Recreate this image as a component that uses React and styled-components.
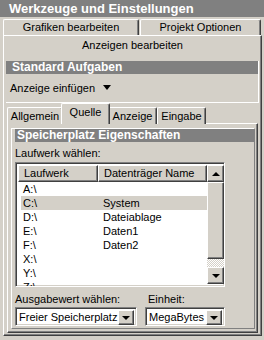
import React from 'react';
import styled, { createGlobalStyle, css } from 'styled-components';

const Global = createGlobalStyle`
  html, body { margin: 0; padding: 0; background: #d4d0c8; }
  body { font-family: "Liberation Sans", Arial, sans-serif; font-size: 11px; color: #000; }
  * { box-sizing: border-box; }
`;

const raised = css`
  border-top: 1px solid #fff;
  border-left: 1px solid #fff;
  border-right: 1px solid #404040;
  border-bottom: 1px solid #404040;
  box-shadow: inset -1px -1px 0 #808080;
`;

const sunken = css`
  border-top: 1px solid #808080;
  border-left: 1px solid #808080;
  border-right: 1px solid #fff;
  border-bottom: 1px solid #fff;
  box-shadow: inset 1px 1px 0 #404040, inset -1px -1px 0 #d4d0c8;
`;

const Window = styled.div`
  width: 264px;
  height: 340px;
  background: #d4d0c8;
  overflow: hidden;
  display: flex;
  flex-direction: column;
`;

const TitleBar = styled.div`
  height: 17px;
  background: #808080;
  color: #fff;
  font-weight: bold;
  font-size: 13px;
  line-height: 17px;
  padding-left: 9px;
  white-space: nowrap;
`;

const BackTabRow = styled.div`
  display: flex;
  gap: 1px;
  padding: 2px 3px 0 3px;
  height: 18px;
`;

const BackTab = styled.div`
  width: ${p => p.$w}px;
  height: 16px;
  border-top: 1px solid #fff;
  border-left: 1px solid #fff;
  border-right: 1px solid #404040;
  border-radius: 2px 2px 0 0;
  box-shadow: inset -1px 0 0 #808080;
  text-align: center;
  line-height: 15px;
  white-space: nowrap;
`;

const OuterPage = styled.div`
  margin: 0 2px 0 3px;
  height: 301px;
  border-top: 1px solid #fff;
  border-left: 1px solid #fff;
  border-right: 1px solid #404040;
  border-bottom: 1px solid #404040;
  box-shadow: inset -1px -1px 0 #808080;
  display: flex;
  flex-direction: column;
`;

const FrontTabLabel = styled.div`
  height: 18px;
  line-height: 18px;
  text-align: center;
  white-space: nowrap;
`;

const OuterContent = styled.div`
  padding: 7px 2px 0 2px;
  display: flex;
  flex-direction: column;
`;

const TaskGroup = styled.div`
  display: flex;
  flex-direction: column;
  height: 42px;
  border-right: 1px solid #fff;
  border-bottom: 1px solid #fff;
`;

const GroupHeader = styled.div`
  height: 13px;
  background: #808080;
  color: #fff;
  font-weight: bold;
  font-size: 12px;
  line-height: 13px;
  padding-left: ${p => p.$pad || 6}px;
  white-space: nowrap;
`;

const TaskLink = styled.div`
  display: flex;
  align-items: center;
  gap: 8px;
  padding: 0 0 1px 4px;
  height: 28px;
`;

const DownTri = styled.span`
  display: inline-block;
  width: 0;
  height: 0;
  border-left: ${p => p.$s}px solid transparent;
  border-right: ${p => p.$s}px solid transparent;
  border-top: ${p => p.$h || p.$s + 1}px solid #000;
`;

const UpTri = styled.span`
  display: inline-block;
  width: 0;
  height: 0;
  border-left: 4px solid transparent;
  border-right: 4px solid transparent;
  border-bottom: 4px solid #000;
`;

const InnerTabs = styled.div`
  display: flex;
  align-items: flex-end;
  height: 20px;
  margin: 1px 0 0 1px;
  position: relative;
  z-index: 1;
`;

const InnerTab = styled.div`
  height: ${p => (p.$active ? 21 : 17)}px;
  width: ${p => p.$w}px;
  margin: ${p => (p.$active ? '0 -2px 0 -2px' : '0')};
  border-top: 1px solid #fff;
  border-left: 1px solid #fff;
  border-right: 1px solid #404040;
  border-radius: 2px 2px 0 0;
  box-shadow: inset -1px 0 0 #808080;
  background: #d4d0c8;
  text-align: center;
  line-height: ${p => (p.$active ? 17 : 16)}px;
  white-space: nowrap;
  position: relative;
  z-index: ${p => (p.$active ? 2 : 0)};
`;

const InnerPage = styled.div`
  margin: -1px 0 0 1px;
  width: 251px;
  height: 210px;
  border-top: 1px solid #fff;
  border-left: 1px solid #fff;
  border-right: 1px solid #404040;
  border-bottom: 1px solid #404040;
  box-shadow: inset -1px -1px 0 #808080;
  padding: 4px 2px 0 3px;
`;

const PropGroup = styled.div`
  height: 201px;
  border-left: 1px solid #fff;
  border-top: 1px solid #fff;
  border-right: 1px solid #808080;
  border-bottom: 1px solid #808080;
  padding: 0 0 0 3px;
`;

const Label = styled.div`
  height: 14px;
  line-height: 14px;
  margin-top: 4px;
  white-space: nowrap;
`;

const LabelRow = styled.div`
  display: flex;
  gap: 11px;
  height: 14px;
  line-height: 14px;
  margin-top: 5px;
`;

const LabelCell = styled.div`
  width: ${p => p.$w}px;
  white-space: nowrap;
`;

const ListView = styled.div`
  ${sunken};
  width: 210px;
  height: 125px;
  margin-top: 2px;
  background: #fff;
  padding: 2px;
  display: flex;
  overflow: hidden;
`;

const ListMain = styled.div`
  width: 189px;
  display: flex;
  flex-direction: column;
`;

const HeaderRow = styled.div`
  display: flex;
  height: 17px;
  flex-shrink: 0;
`;

const HeaderCell = styled.div`
  ${raised};
  width: ${p => p.$w}px;
  background: #d4d0c8;
  padding-left: 5px;
  line-height: 15px;
  white-space: nowrap;
`;

const Row = styled.div`
  display: flex;
  height: 14px;
  flex-shrink: 0;
  line-height: 14px;
  margin-left: 3px;
  background: ${p => (p.$sel ? '#d4d0c8' : 'transparent')};
`;

const Cell = styled.div`
  width: ${p => p.$w}px;
  padding-left: ${p => p.$pad}px;
  white-space: nowrap;
`;

const ScrollBar = styled.div`
  width: 17px;
  display: flex;
  flex-direction: column;
`;

const SBtn = styled.div`
  ${raised};
  width: 17px;
  height: ${p => p.$h || 17}px;
  background: #d4d0c8;
  display: flex;
  align-items: center;
  justify-content: center;
  flex-shrink: 0;
`;

const Track = styled.div`
  flex: 1;
  background-color: #fff;
  background-image: conic-gradient(#d4d0c8 25%, #fff 0 50%, #d4d0c8 0 75%, #fff 0);
  background-size: 2px 2px;
`;

const ComboRow = styled.div`
  display: flex;
  gap: 8px;
  margin-top: 1px;
`;

const Combo = styled.div`
  ${sunken};
  width: ${p => p.$w}px;
  height: 19px;
  background: #fff;
  padding: 2px;
  display: flex;
`;

const ComboText = styled.div`
  flex: 1;
  line-height: 15px;
  padding-left: 1px;
  white-space: nowrap;
`;

const DropBtn = styled.div`
  ${raised};
  width: 16px;
  height: 15px;
  background: #d4d0c8;
  display: flex;
  align-items: center;
  justify-content: center;
`;

const rows = [
  ['A:\\', ''],
  ['C:\\', 'System', true],
  ['D:\\', 'Dateiablage'],
  ['E:\\', 'Daten1'],
  ['F:\\', 'Daten2'],
  ['X:\\', ''],
  ['Y:\\', ''],
  ['Z:\\', ''],
];

export default function App() {
  return (
    <Window>
      <Global />
      <TitleBar>Werkzeuge und Einstellungen</TitleBar>
      <BackTabRow>
        <BackTab $w={136}>Grafiken bearbeiten</BackTab>
        <BackTab $w={121}>Projekt Optionen</BackTab>
      </BackTabRow>
      <OuterPage>
        <FrontTabLabel>Anzeigen bearbeiten</FrontTabLabel>
        <OuterContent>
          <TaskGroup>
            <GroupHeader>Standard Aufgaben</GroupHeader>
            <TaskLink>
              Anzeige einfügen <DownTri $s={4} $h={5} />
            </TaskLink>
          </TaskGroup>
          <InnerTabs>
            <InnerTab $w={56}>Allgemein</InnerTab>
            <InnerTab $w={49} $active>Quelle</InnerTab>
            <InnerTab $w={49}>Anzeige</InnerTab>
            <InnerTab $w={49}>Eingabe</InnerTab>
          </InnerTabs>
          <InnerPage>
            <PropGroup>
              <GroupHeader $pad={2}>Speicherplatz Eigenschaften</GroupHeader>
              <Label>Laufwerk wählen:</Label>
              <ListView>
                <ListMain>
                  <HeaderRow>
                    <HeaderCell $w={80}>Laufwerk</HeaderCell>
                    <HeaderCell $w={109}>Datenträger Name</HeaderCell>
                  </HeaderRow>
                  {rows.map(([a, b, sel]) => (
                    <Row key={a} $sel={sel}>
                      <Cell $w={77} $pad={2}>{a}</Cell>
                      <Cell $w={109} $pad={5}>{b}</Cell>
                    </Row>
                  ))}
                </ListMain>
                <ScrollBar>
                  <SBtn><UpTri /></SBtn>
                  <SBtn $h={77} />
                  <Track />
                  <SBtn><DownTri $s={4} $h={4} /></SBtn>
                </ScrollBar>
              </ListView>
              <LabelRow>
                <LabelCell $w={122}>Ausgabewert wählen:</LabelCell>
                <LabelCell $w={80}>Einheit:</LabelCell>
              </LabelRow>
              <ComboRow>
                <Combo $w={122}>
                  <ComboText>Freier Speicherplatz</ComboText>
                  <DropBtn><DownTri $s={4} $h={4} /></DropBtn>
                </Combo>
                <Combo $w={80}>
                  <ComboText>MegaBytes</ComboText>
                  <DropBtn><DownTri $s={4} $h={4} /></DropBtn>
                </Combo>
              </ComboRow>
            </PropGroup>
          </InnerPage>
        </OuterContent>
      </OuterPage>
    </Window>
  );
}
